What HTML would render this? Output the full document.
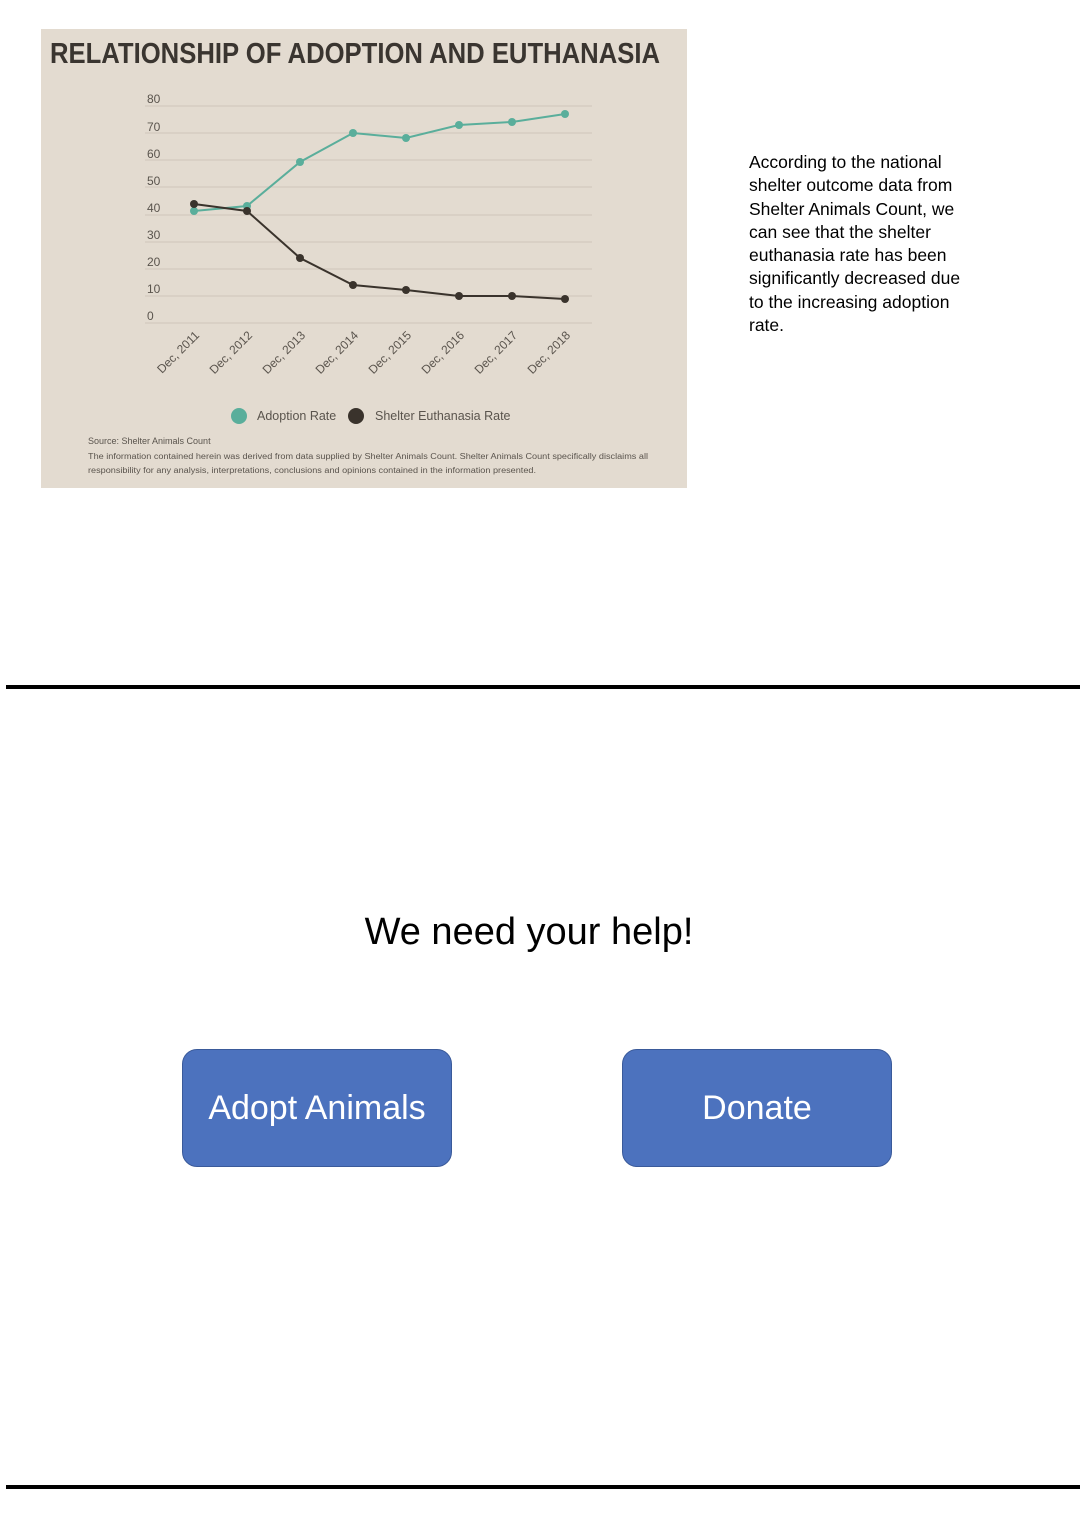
<!DOCTYPE html>
<html><head><style>
body{margin:0;width:1088px;height:1522px;background:#fff;position:relative;font-family:"Liberation Sans",sans-serif;overflow:hidden}
.p{position:absolute;left:749px;top:151px;width:300px;font-size:17.5px;line-height:23.3px;color:#000;white-space:nowrap}
.hr{position:absolute;left:6px;width:1074px;height:4px;background:#000}
.h{position:absolute;left:0;width:1058px;text-align:center;top:911px;font-size:38px}
.b{position:absolute;top:1049px;width:268px;height:116px;background:#4c72be;border:1px solid #3a5a9a;border-radius:15px;color:#fff;font-size:34px;display:flex;align-items:center;justify-content:center}
</style></head><body>
<svg style="position:absolute;left:0;top:0" width="700" height="500" font-family="Liberation Sans, sans-serif">
<rect x="41" y="29" width="646" height="459" fill="#e3dbd0"/>
<text x="50" y="63" font-size="29" font-weight="bold" fill="#3a3530" textLength="610" lengthAdjust="spacingAndGlyphs">RELATIONSHIP OF ADOPTION AND EUTHANASIA</text>
<g stroke="#cfc6ba" stroke-width="1">
<line x1="145" x2="592" y1="106" y2="106"/><line x1="145" x2="592" y1="133" y2="133"/><line x1="145" x2="592" y1="160" y2="160"/><line x1="145" x2="592" y1="187" y2="187"/><line x1="145" x2="592" y1="215" y2="215"/><line x1="145" x2="592" y1="242" y2="242"/><line x1="145" x2="592" y1="269" y2="269"/><line x1="145" x2="592" y1="296" y2="296"/><line x1="145" x2="592" y1="323" y2="323"/>
</g>
<g font-size="12" fill="#5a544d">
<text x="147" y="103">80</text><text x="147" y="131">70</text><text x="147" y="158">60</text><text x="147" y="185">50</text><text x="147" y="212">40</text><text x="147" y="239">30</text><text x="147" y="266">20</text><text x="147" y="293">10</text><text x="147" y="320">0</text>
</g>
<g font-size="12" fill="#5a544d" text-anchor="end">
<text transform="translate(200,336) rotate(-45)">Dec, 2011</text>
<text transform="translate(253,336) rotate(-45)">Dec, 2012</text>
<text transform="translate(306,336) rotate(-45)">Dec, 2013</text>
<text transform="translate(359,336) rotate(-45)">Dec, 2014</text>
<text transform="translate(412,336) rotate(-45)">Dec, 2015</text>
<text transform="translate(465,336) rotate(-45)">Dec, 2016</text>
<text transform="translate(518,336) rotate(-45)">Dec, 2017</text>
<text transform="translate(571,336) rotate(-45)">Dec, 2018</text>
</g>
<polyline fill="none" stroke="#5aae9b" stroke-width="2" points="194,211 247,206 300,162 353,133 406,138 459,125 512,122 565,114"/>
<g fill="#5aae9b"><circle cx="194" cy="211" r="4"/><circle cx="247" cy="206" r="4"/><circle cx="300" cy="162" r="4"/><circle cx="353" cy="133" r="4"/><circle cx="406" cy="138" r="4"/><circle cx="459" cy="125" r="4"/><circle cx="512" cy="122" r="4"/><circle cx="565" cy="114" r="4"/></g>
<polyline fill="none" stroke="#3a332c" stroke-width="2" points="194,204 247,211 300,258 353,285 406,290 459,296 512,296 565,299"/>
<g fill="#3a332c"><circle cx="194" cy="204" r="4"/><circle cx="247" cy="211" r="4"/><circle cx="300" cy="258" r="4"/><circle cx="353" cy="285" r="4"/><circle cx="406" cy="290" r="4"/><circle cx="459" cy="296" r="4"/><circle cx="512" cy="296" r="4"/><circle cx="565" cy="299" r="4"/></g>
<circle cx="239" cy="416" r="8" fill="#5aae9b"/><text x="257" y="420" font-size="12.5" fill="#5a544d">Adoption Rate</text>
<circle cx="356" cy="416" r="8" fill="#3a332c"/><text x="375" y="420" font-size="12.5" fill="#5a544d">Shelter Euthanasia Rate</text>
<text x="88" y="444" font-size="9" fill="#5a544d">Source: Shelter Animals Count</text>
<text x="88" y="459" font-size="8" fill="#5a544d" textLength="560" lengthAdjust="spacingAndGlyphs">The information contained herein was derived from data supplied by Shelter Animals Count. Shelter Animals Count specifically disclaims all</text>
<text x="88" y="473" font-size="8" fill="#5a544d" textLength="448" lengthAdjust="spacingAndGlyphs">responsibility for any analysis, interpretations, conclusions and opinions contained in the information presented.</text>
</svg>
<div class="p">According to the national<br>shelter outcome data from<br>Shelter Animals Count, we<br>can see that the shelter<br>euthanasia rate has been<br>significantly decreased due<br>to the increasing adoption<br>rate.</div>
<div class="hr" style="top:685px"></div>
<div class="h">We need your help!</div>
<div class="b" style="left:182px">Adopt Animals</div>
<div class="b" style="left:622px">Donate</div>
<div class="hr" style="top:1485px"></div>
</body></html>
